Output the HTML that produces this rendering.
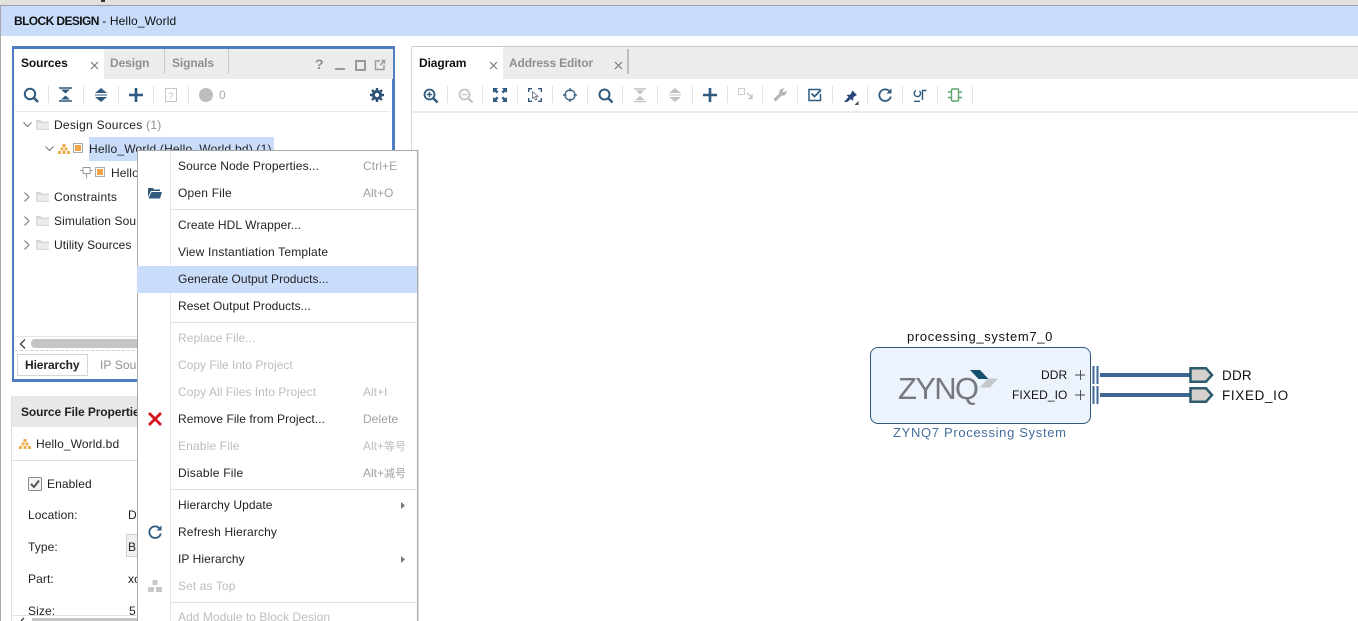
<!DOCTYPE html>
<html><head><meta charset="utf-8">
<style>
html,body{margin:0;padding:0;width:1358px;height:621px;overflow:hidden;background:#fff}
body{position:relative;font-family:"Liberation Sans","Noto Sans CJK SC",sans-serif;font-size:12px;color:#222}
.a{position:absolute}
.t{position:absolute;white-space:nowrap;line-height:14px;letter-spacing:.1px}
.b{font-weight:bold;letter-spacing:-.1px}
.g{color:#8f8f8f}
.d{color:#bdbdbd}
.s{color:#a0a0a0}
.c{font-size:11px;letter-spacing:0}
.sep{position:absolute;width:1px;height:17px;background:#e2e2e2}
.ms{position:absolute;left:171px;right:0;height:1px;background:#e0e0e0}
svg{position:absolute;overflow:visible}
</style></head><body>

<!-- top chrome -->
<div class="a" style="left:0;top:0;width:1358px;height:5px;background:#e1e1dd"></div>
<div class="a" style="left:101px;top:0;width:4px;height:2px;background:#333"></div>
<div class="a" style="left:0;top:5px;width:1358px;height:1px;background:#9c9fa8"></div>
<div class="a" style="left:0;top:6px;width:1358px;height:30px;background:#c9ddfb"></div>
<div class="a" style="left:0;top:6px;width:1px;height:615px;background:#a8a8a8"></div>
<div class="t" style="left:14px;top:14px;color:#111;letter-spacing:.12px"><b style="letter-spacing:-.6px">BLOCK DESIGN</b> - Hello_World</div>

<!-- Sources panel -->
<div class="a" style="left:12px;top:46px;width:378px;height:330px;border:3px solid #4f7dc2;border-width:3px 3px 3px 2px"></div>
<div class="a" style="left:14px;top:49px;width:379px;height:30px;background:#ececec"></div>
<div class="a" style="left:14px;top:49px;width:90px;height:30px;background:#fff"></div>
<div class="t b" style="left:21px;top:56px;color:#111">Sources</div>
<svg style="left:90px;top:61px" width="9" height="9"><path d="M1 1L8 8M8 1L1 8" stroke="#777" stroke-width="1.1"/></svg>
<div class="t b g" style="left:110px;top:56px">Design</div>
<div class="a" style="left:164px;top:49px;width:1px;height:25px;background:#c9c9c9"></div>
<div class="t b g" style="left:172px;top:56px">Signals</div>
<div class="a" style="left:228px;top:49px;width:1px;height:25px;background:#c9c9c9"></div>
<div class="t b g" style="left:315px;top:57px;font-size:14px">?</div>
<div class="a" style="left:335px;top:68px;width:10px;height:2px;background:#999"></div>
<div class="a" style="left:355px;top:60px;width:7px;height:7px;border:2px solid #999"></div>
<svg style="left:374px;top:59px" width="12" height="12"><path d="M6 2H1.5V10.5H10V6M6.5 6L10.5 1.5M7.5 1.5H10.5V4.5" fill="none" stroke="#999" stroke-width="1.4"/></svg>

<!-- sources toolbar -->
<svg style="left:23px;top:87px" width="16" height="16"><circle cx="7" cy="7" r="5.2" fill="none" stroke="#2f5a7e" stroke-width="2"/><path d="M10.5 10.5L15 15" stroke="#2f5a7e" stroke-width="2.4"/></svg>
<div class="sep" style="left:48px;top:86px"></div>
<svg style="left:59px;top:87px" width="13" height="15"><path d="M0 1H13M0 14H13" stroke="#2f5a7e" stroke-width="1.6"/><path d="M2 2.5H11L6.5 6.5ZM2 12.5H11L6.5 8.5Z" fill="#2f5a7e"/></svg>
<div class="sep" style="left:83px;top:86px"></div>
<svg style="left:95px;top:88px" width="12" height="14"><path d="M6 0L12 5H0ZM6 14L0 9H12Z" fill="#2f5a7e"/><path d="M0 7H12" stroke="#2f5a7e"/></svg>
<div class="sep" style="left:118px;top:86px"></div>
<svg style="left:129px;top:88px" width="14" height="14"><path d="M7 0V14M0 7H14" stroke="#2f5a80" stroke-width="2.6"/></svg>
<div class="sep" style="left:153px;top:86px"></div>
<svg style="left:165px;top:88px" width="12" height="14"><rect x=".5" y=".5" width="11" height="13" fill="none" stroke="#c5c5c5"/><text x="3.5" y="11" font-size="9" fill="#bbb" font-family="Liberation Sans">?</text></svg>
<div class="sep" style="left:188px;top:86px"></div>
<div class="a" style="left:199px;top:88px;width:14px;height:14px;border-radius:50%;background:#bdbdbd"></div>
<div class="t" style="left:219px;top:88px;color:#aaa">0</div>
<svg style="left:370px;top:88px" width="14" height="14" viewBox="0 0 14 14"><circle cx="7" cy="7" r="3.6" fill="none" stroke="#2f5178" stroke-width="3"/><path d="M7 0V14M0 7H14M2 2L12 12M12 2L2 12" stroke="#2f5178" stroke-width="2.4" stroke-dasharray="2.4 9.2 2.4 0"/></svg>

<div class="a" style="left:15px;top:111px;width:375px;height:1px;background:#e8e8e8"></div>

<!-- tree -->
<svg style="left:23px;top:122px" width="9" height="6"><path d="M.5 .5L4.5 4.5L8.5 .5" fill="none" stroke="#777" stroke-width="1.1"/></svg>
<svg style="left:36px;top:119px" width="13" height="11"><path d="M0 1H5L6 2.5H13V11H0Z" fill="#d8d8d8"/><path d="M1.5 4H13V10H1.5Z" fill="#ececec"/></svg>
<div class="t" style="left:54px;top:118px;letter-spacing:.27px">Design Sources <span class="g">(1)</span></div>

<div class="a" style="left:89px;top:137px;width:185px;height:24px;background:#c9ddfb"></div>
<svg style="left:45px;top:146px" width="9" height="6"><path d="M.5 .5L4.5 4.5L8.5 .5" fill="none" stroke="#777" stroke-width="1.1"/></svg>
<svg style="left:58px;top:144px" width="12" height="10"><path d="M4.5 0H7.5V3H4.5ZM2.5 3.5H5.5V6.5H2.5ZM6.5 3.5H9.500V6.5H6.5ZM0 7H3V10H0ZM4.5 7H7.5V10H4.5ZM9 7H12V10H9Z" fill="#efae4e"/></svg>
<div class="a" style="left:73px;top:143px;width:8px;height:8px;border:1px solid #aaa;background:#f3a445;box-shadow:inset 0 0 0 1px #fff"></div>
<div class="t" style="left:89px;top:142px;letter-spacing:.2px">Hello_World (Hello_World.bd) (1)</div>

<svg style="left:80px;top:166px" width="13" height="13"><path d="M3 1.5H10V7.5H3ZM6.5 7.5V12.5M0 4.5H3M10 4.5H13" fill="none" stroke="#999"/></svg>
<div class="a" style="left:95px;top:167px;width:8px;height:8px;border:1px solid #aaa;background:#f3a445;box-shadow:inset 0 0 0 1px #fff"></div>
<div class="t" style="left:111px;top:166px">Hello</div>

<svg style="left:24px;top:192px" width="6" height="10"><path d="M.5 .5L5 5L.5 9.5" fill="none" stroke="#777" stroke-width="1.1"/></svg>
<svg style="left:36px;top:191px" width="13" height="11"><path d="M0 1H5L6 2.5H13V11H0Z" fill="#d8d8d8"/><path d="M1.5 4H13V10H1.5Z" fill="#ececec"/></svg>
<div class="t" style="left:54px;top:190px;letter-spacing:.22px">Constraints</div>
<svg style="left:24px;top:216px" width="6" height="10"><path d="M.5 .5L5 5L.5 9.5" fill="none" stroke="#777" stroke-width="1.1"/></svg>
<svg style="left:36px;top:215px" width="13" height="11"><path d="M0 1H5L6 2.5H13V11H0Z" fill="#d8d8d8"/><path d="M1.5 4H13V10H1.5Z" fill="#ececec"/></svg>
<div class="t" style="left:54px;top:214px">Simulation Sou</div>
<svg style="left:24px;top:240px" width="6" height="10"><path d="M.5 .5L5 5L.5 9.5" fill="none" stroke="#777" stroke-width="1.1"/></svg>
<svg style="left:36px;top:239px" width="13" height="11"><path d="M0 1H5L6 2.5H13V11H0Z" fill="#d8d8d8"/><path d="M1.5 4H13V10H1.5Z" fill="#ececec"/></svg>
<div class="t" style="left:54px;top:238px;letter-spacing:.05px">Utility Sources</div>

<!-- scroll + tabs -->
<div class="a" style="left:15px;top:336px;width:125px;height:1px;background:#e4e4e4"></div>
<svg style="left:19px;top:339px" width="7" height="10"><path d="M6 .5L1.5 5L6 9.5" fill="none" stroke="#444" stroke-width="1.4"/></svg>
<div class="a" style="left:31px;top:339px;width:110px;height:9px;background:#c4c4c4;border-radius:4px"></div>
<div class="a" style="left:15px;top:350px;width:125px;height:0;border-top:1px dashed #cfcfcf"></div>
<div class="a" style="left:17px;top:354px;width:69px;height:20px;border:1px solid #d4d4d4;background:#fff"></div>
<div class="t b" style="left:25px;top:358px;color:#222">Hierarchy</div>
<div class="t g" style="left:100px;top:358px">IP Sou</div>

<!-- Source File Properties -->
<div class="a" style="left:11px;top:396px;width:130px;height:225px;border-left:1px solid #ddd"></div>
<div class="a" style="left:12px;top:396px;width:128px;height:31px;background:#e8e8e8"></div>
<div class="t b" style="left:21px;top:405px;color:#222">Source File Propertie</div>
<svg style="left:19px;top:439px" width="12" height="10"><path d="M4.5 0H7.5V3H4.5ZM2.5 3.5H5.5V6.5H2.5ZM6.5 3.5H9.500V6.5H6.5ZM0 7H3V10H0ZM4.5 7H7.5V10H4.5ZM9 7H12V10H9Z" fill="#efae4e"/></svg>
<div class="t" style="left:36px;top:437px">Hello_World.bd</div>
<div class="a" style="left:13px;top:460px;width:127px;height:1px;background:#e0e0e0"></div>
<div class="a" style="left:28px;top:477px;width:12px;height:12px;border:1px solid #8a8a8a;border-radius:2px;background:#f4f4f4"></div>
<svg style="left:30px;top:479px" width="10" height="10"><path d="M1 5L4 8L9 1.5" fill="none" stroke="#555" stroke-width="2"/></svg>
<div class="t" style="left:47px;top:477px">Enabled</div>
<div class="t" style="left:28px;top:508px">Location:</div>
<div class="t" style="left:128px;top:508px">D</div>
<div class="t" style="left:28px;top:540px">Type:</div>
<div class="a" style="left:126px;top:534px;width:14px;height:23px;background:#f0f0f0;border:1px solid #d0d0d0;border-right:0;box-sizing:border-box"></div>
<div class="t" style="left:128px;top:540px">B</div>
<div class="t" style="left:28px;top:572px">Part:</div>
<div class="t" style="left:128px;top:572px">xc</div>
<div class="t" style="left:28px;top:604px">Size:</div>
<div class="t" style="left:129px;top:604px">5</div>
<div class="a" style="left:13px;top:615px;width:127px;height:1px;background:#e0e0e0"></div>
<div class="a" style="left:32px;top:618px;width:108px;height:3px;background:#c4c4c4"></div>
<svg style="left:20px;top:618px" width="6" height="3"><path d="M4 0L1 3" stroke="#444" stroke-width="1.4"/></svg>

<!-- Diagram panel -->
<div class="a" style="left:411px;top:46px;width:947px;height:1px;background:#c5cbc9"></div>
<div class="a" style="left:411px;top:46px;width:1px;height:575px;background:#d8d8d8"></div>
<div class="a" style="left:412px;top:47px;width:946px;height:32px;background:#ececec"></div>
<div class="a" style="left:412px;top:47px;width:91px;height:32px;background:#fff"></div>
<div class="t b" style="left:419px;top:56px;color:#111">Diagram</div>
<svg style="left:489px;top:61px" width="9" height="9"><path d="M1 1L8 8M8 1L1 8" stroke="#777" stroke-width="1.1"/></svg>
<div class="t b g" style="left:509px;top:56px;letter-spacing:-.15px">Address Editor</div>
<svg style="left:614px;top:61px" width="9" height="9"><path d="M1 1L8 8M8 1L1 8" stroke="#777" stroke-width="1.1"/></svg>
<div class="a" style="left:627px;top:49px;width:2px;height:25px;background:#bdbdbd"></div>
<div class="a" style="left:412px;top:111px;width:946px;height:2px;background:#ececec"></div>

<!-- diagram toolbar -->
<svg style="left:423px;top:88px" width="15" height="15"><circle cx="6.5" cy="6.5" r="5" fill="none" stroke="#2f5a7e" stroke-width="1.8"/><path d="M10 10L14.5 14.5" stroke="#2f5a7e" stroke-width="2.4"/><path d="M6.5 3.8V9.2M3.8 6.5H9.2" stroke="#2f5a7e" stroke-width="1.4"/></svg>
<div class="sep" style="left:447px;top:86px"></div>
<svg style="left:458px;top:88px" width="15" height="15"><circle cx="6.5" cy="6.5" r="5" fill="none" stroke="#c4c4c4" stroke-width="1.8"/><path d="M10 10L14.5 14.5" stroke="#c4c4c4" stroke-width="2.4"/><path d="M3.8 6.5H9.2" stroke="#c4c4c4" stroke-width="1.4"/></svg>
<div class="sep" style="left:482px;top:86px"></div>
<svg style="left:493px;top:88px" width="14" height="14"><path d="M0 0H5L3.5 1.7L5.5 3.7L3.7 5.5L1.7 3.5L0 5ZM14 0H9L10.5 1.7L8.500 3.700L10.300 5.500L12.300 3.500L14 5ZM0 14H5L3.500 12.300L5.500 10.300L3.700 8.500L1.700 10.500L0 9ZM14 14H9L10.500 12.300L8.500 10.300L10.300 8.500L12.300 10.500L14 9Z" fill="#2f5a7e"/></svg>
<div class="sep" style="left:517px;top:86px"></div>
<svg style="left:528px;top:88px" width="14" height="14"><path d="M.7 4V.7H4M10 .7H13.300V4M.7 10V13.300H4M10 13.300H13.300V10" fill="none" stroke="#2f5a7e" stroke-width="1.400"/><path d="M4.500 3.500L10 8.500H7.500L9 11.500L7.500 12L6 9L4.500 10.500Z" fill="#fff" stroke="#667" stroke-width=".8"/></svg>
<div class="sep" style="left:552px;top:86px"></div>
<svg style="left:563px;top:88px" width="14" height="14"><circle cx="7" cy="7" r="5" fill="none" stroke="#2f5a7e" stroke-width="1.300"/><path d="M7 0V3.500M7 10.500V14M0 7H3.500M10.500 7H14" stroke="#2f5a7e" stroke-width="1.300"/></svg>
<div class="sep" style="left:587px;top:86px"></div>
<svg style="left:598px;top:88px" width="15" height="15"><circle cx="6.500" cy="6.500" r="5" fill="none" stroke="#2f5a7e" stroke-width="2"/><path d="M10 10L14.500 14.500" stroke="#2f5a7e" stroke-width="2.400"/></svg>
<div class="sep" style="left:622px;top:86px"></div>
<svg style="left:634px;top:88px" width="12" height="14"><path d="M0 1H12M0 13.500H12" stroke="#c2c2c2" stroke-width="1.500"/><path d="M1.500 2.500H10.500L6 6.500ZM1.500 12H10.500L6 8Z" fill="#c2c2c2"/></svg>
<div class="sep" style="left:657px;top:86px"></div>
<svg style="left:669px;top:88px" width="12" height="14"><path d="M6 0L12 5H0ZM6 14L0 9H12Z" fill="#c2c2c2"/><path d="M0 7H12" stroke="#c2c2c2"/></svg>
<div class="sep" style="left:692px;top:86px"></div>
<svg style="left:703px;top:88px" width="14" height="14"><path d="M7 0V14M0 7H14" stroke="#2f5a80" stroke-width="2.600"/></svg>
<div class="sep" style="left:727px;top:86px"></div>
<svg style="left:738px;top:88px" width="15" height="13"><rect x=".5" y=".5" width="6" height="6" fill="#fff" stroke="#ccc"/><path d="M9 5L14 10M14 6V10.500H10" fill="none" stroke="#bbb" stroke-width="1.200"/></svg>
<div class="sep" style="left:762px;top:86px"></div>
<svg style="left:773px;top:88px" width="14" height="14"><path d="M1.500 12.500L7.500 6.500" stroke="#b4b4b4" stroke-width="3.200"/><path d="M6.500 5.500A3.800 3.800 0 0 1 11.500 .8L9.500 3L11 4.500L13.300 2.500A3.800 3.800 0 0 1 8.500 7.500Z" fill="#b4b4b4"/></svg>
<div class="sep" style="left:797px;top:86px"></div>
<svg style="left:808px;top:88px" width="14" height="14"><path d="M12.500 6V12.500H1V1.500H12.500" fill="none" stroke="#2f5a7e" stroke-width="1.500"/><path d="M3.500 5.500L6.500 8.500L13 2" fill="none" stroke="#2f5a7e" stroke-width="1.800"/></svg>
<div class="sep" style="left:832px;top:86px"></div>
<svg style="left:843px;top:89px" width="18" height="17"><path d="M1 13L5.500 8L3.500 6L7.500 5.500L9.500 1.500L14 6L10.500 8L10 12L8 10L4 13Z" fill="#27477a"/><path d="M15.500 12V16H11.500Z" fill="#444"/></svg>
<div class="sep" style="left:867px;top:86px"></div>
<svg style="left:878px;top:88px" width="14" height="14"><path d="M12 4A5.800 5.800 0 1 0 12.800 8.500" fill="none" stroke="#2f5a7e" stroke-width="1.800"/><path d="M13.500 .5V5.500H8.500Z" fill="#2f5a7e"/></svg>
<div class="sep" style="left:902px;top:86px"></div>
<svg style="left:913px;top:88px" width="14" height="14"><path d="M7 13.300H1M13.500 2.500H9.500V12" fill="none" stroke="#2f5a7e" stroke-width="1.400"/><path d="M3 2.500A3.200 3.200 0 1 0 6.500 3" fill="none" stroke="#2f5a7e" stroke-width="1.400"/></svg>
<div class="sep" style="left:937px;top:86px"></div>
<svg style="left:948px;top:88px" width="14" height="14"><rect x="3.500" y="1" width="7" height="12" rx="1" fill="#fff" stroke="#5fa36b" stroke-width="1.400"/><path d="M0 4H3M0 9.500H3M11 4H14M11 9.500H14" stroke="#5fa36b" stroke-width="1.400"/></svg>
<div class="sep" style="left:972px;top:86px"></div>

<!-- block -->
<div class="t" style="left:907px;top:330px;font-size:13px;color:#111;letter-spacing:.65px">processing_system7_0</div>
<div class="a" style="left:870px;top:347px;width:219px;height:75px;border:1px solid #32587e;border-radius:8px;background:#ecf3fc"></div>
<div class="t" style="left:898px;top:371px;font-size:31px;line-height:36px;color:#75797e;letter-spacing:-1.700px">ZYNQ<span style="font-size:4px;letter-spacing:0">.</span></div>
<svg style="left:968px;top:369px" width="32" height="20"><path d="M2 1H12L20.500 10H10.500Z" fill="#15506f"/><path d="M20 9.500H30L22 18.500H12Z" fill="#c3c8cc"/></svg>
<div class="t" style="left:1041px;top:368px;color:#111">DDR</div>
<div class="t" style="left:1012px;top:388px;color:#111;letter-spacing:.1px">FIXED_IO</div>
<svg style="left:1075px;top:370px" width="11" height="31"><path d="M5.500 0V10M0 5H10M5.500 20V30M0 25H10" stroke="#444" stroke-width=".9"/></svg>
<div class="t" style="left:893px;top:426px;font-size:13px;color:#456e9e;letter-spacing:.67px">ZYNQ7 Processing System</div>

<!-- ports and wires -->
<svg style="left:1090px;top:364px" width="130" height="44">
<path d="M3.500 2V20M7.500 2V20M3.500 22V40M7.500 22V40" stroke="#3e6a97" stroke-width="2"/>
<path d="M10 11H100M10 31H100" stroke="#3d6695" stroke-width="4"/>
<path d="M100.500 4.300H116L122 11L116 17.700H100.500Z" fill="#d5d0cc" stroke="#2c5a6e" stroke-width="2.500"/>
<path d="M100.500 24.300H116L122 31L116 37.700H100.500Z" fill="#d5d0cc" stroke="#2c5a6e" stroke-width="2.500"/>
</svg>
<div class="t" style="left:1222px;top:368px;font-size:13.500px;line-height:16px;color:#111;letter-spacing:.2px">DDR</div>
<div class="t" style="left:1222px;top:388px;font-size:13.500px;line-height:16px;color:#111;letter-spacing:.65px">FIXED_IO</div>

<!-- context menu -->
<div class="a" style="left:137px;top:150px;width:279px;height:471px;background:#fff;border:1px solid #a9a9a9;border-bottom:0;box-sizing:content-box;box-shadow:1px 0 0 #ddd">
<div class="a" style="left:32px;top:0;width:1px;height:471px;background:#e6e6e6"></div>
<div class="ms" style="left:33px;top:58px"></div>
<div class="ms" style="left:33px;top:171px"></div>
<div class="ms" style="left:33px;top:338px"></div>
<div class="ms" style="left:33px;top:451px"></div>
<div class="a" style="left:-1px;top:115px;width:280px;height:27px;background:#c9ddfb"></div>
</div>

<div class="t" style="left:178px;top:159px;letter-spacing:.12px">Source Node Properties...</div><div class="t s" style="left:363px;top:159px">Ctrl+E</div>
<div class="t" style="left:178px;top:186px;letter-spacing:.2px">Open File</div><div class="t s" style="left:363px;top:186px;letter-spacing:0">Alt+O</div>
<svg style="left:148px;top:187px" width="14" height="12"><path d="M0 1H5L6 2.500H12V4H3L0 10Z" fill="#2f5a7e"/><path d="M3.500 5H14L12 11.500H0.500Z" fill="#2f5a7e"/></svg>
<div class="t" style="left:178px;top:218px;letter-spacing:.08px">Create HDL Wrapper...</div>
<div class="t" style="left:178px;top:245px;letter-spacing:.17px">View Instantiation Template</div>
<div class="t" style="left:178px;top:272px;letter-spacing:.02px">Generate Output Products...</div>
<div class="t" style="left:178px;top:299px;letter-spacing:.06px">Reset Output Products...</div>
<div class="t d" style="left:178px;top:331px;letter-spacing:.05px">Replace File...</div>
<div class="t d" style="left:178px;top:358px;letter-spacing:0">Copy File Into Project</div>
<div class="t d" style="left:178px;top:385px;letter-spacing:.05px">Copy All Files Into Project</div><div class="t d" style="left:363px;top:385px;letter-spacing:0">Alt+I</div>
<svg style="left:148px;top:412px" width="14" height="14"><path d="M1 1L13 13M13 1L1 13" stroke="#d6141c" stroke-width="2.800"/></svg>
<div class="t" style="left:178px;top:412px;letter-spacing:.06px">Remove File from Project...</div><div class="t s" style="left:363px;top:412px">Delete</div>
<div class="t d" style="left:178px;top:439px;letter-spacing:.15px">Enable File</div><div class="t d" style="left:363px;top:439px;letter-spacing:0">Alt+<span class="c">等号</span></div>
<div class="t" style="left:178px;top:466px;letter-spacing:.23px">Disable File</div><div class="t s" style="left:363px;top:466px;letter-spacing:0">Alt+<span class="c">减号</span></div>
<div class="t" style="left:178px;top:498px;letter-spacing:.07px">Hierarchy Update</div>
<svg style="left:401px;top:502px" width="4" height="7"><path d="M0 0L4 3.500L0 7Z" fill="#777"/></svg>
<svg style="left:148px;top:525px" width="14" height="14"><path d="M12 4A5.800 5.800 0 1 0 12.800 8.500" fill="none" stroke="#2f5a7e" stroke-width="1.800"/><path d="M13.500 .5V5.500H8.500Z" fill="#2f5a7e"/></svg>
<div class="t" style="left:178px;top:525px;letter-spacing:.14px">Refresh Hierarchy</div>
<div class="t" style="left:178px;top:552px;letter-spacing:.07px">IP Hierarchy</div>
<svg style="left:401px;top:556px" width="4" height="7"><path d="M0 0L4 3.500L0 7Z" fill="#777"/></svg>
<svg style="left:148px;top:580px" width="14" height="12"><path d="M4.500 0H9.500V5H4.500ZM0 7H6V12H0ZM8 7H14V12H8Z" fill="#c8c8c8"/></svg>
<div class="t d" style="left:178px;top:579px">Set as Top</div>
<div class="t d" style="left:178px;top:610px;letter-spacing:.05px">Add Module to Block Design</div>

</body></html>
